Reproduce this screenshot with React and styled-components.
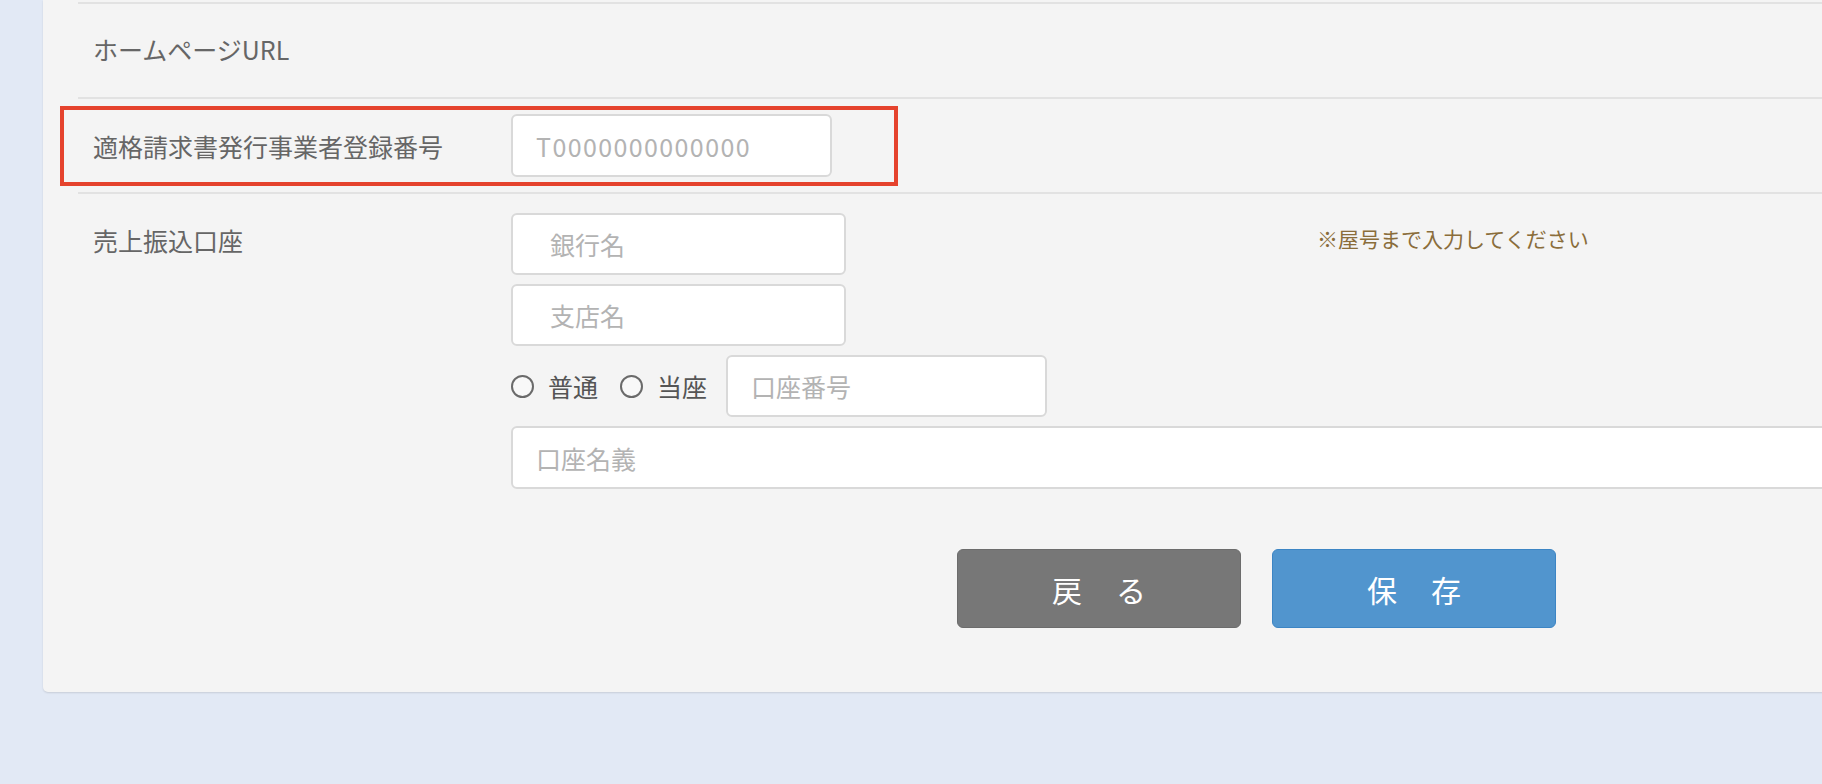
import React from 'react'
import styled, { createGlobalStyle } from 'styled-components'

const GlobalStyle = createGlobalStyle`
    html, body {
        margin: 0;
        padding: 0;
        background: #e2e9f5;
        overflow: hidden;
    }
    body {
        font-family: "Noto Sans CJK JP", "Noto Sans", sans-serif;
    }
    * {
        box-sizing: border-box;
    }
`;

const Page = styled.div`
    width: 1822px;
    height: 784px;
    overflow: hidden;
    padding-left: 43px;
`;

const Panel = styled.div`
    width: 2000px;
    background: #f4f4f4;
    border-radius: 0 0 0 5px;
    box-shadow: 0 1px 2px rgba(0, 0, 0, 0.12);
    padding: 2px 0 64px 35px;
`;

const Row = styled.div`
    position: relative;
    display: flex;
    align-items: ${p => (p.top ? 'flex-start' : 'center')};
    border-top: 2px solid #e2e2e2;
    min-height: ${p => p.height || 0}px;
    padding: ${p => p.pad || '0'};
`;

const Label = styled.div`
    width: 433px;
    flex: none;
    padding-left: 15px;
    font-size: 25px;
    line-height: ${p => p.lh || 36}px;
    color: #666666;
`;

const Fields = styled.div`
    display: flex;
    flex-direction: column;
    gap: 9px;
    flex: 1;
`;

const FieldLine = styled.div`
    display: flex;
    align-items: center;
`;

const Input = styled.input`
    width: ${p => p.w}px;
    height: ${p => p.h || 62}px;
    flex: none;
    border: 2px solid #d9d9d9;
    border-radius: 6px;
    background: #ffffff;
    padding: 0 0 0 ${p => p.indent || 23}px;
    font-family: "Noto Sans CJK JP", "Noto Sans", sans-serif;
    font-size: 25px;
    letter-spacing: ${p => p.ls || 0}px;
    color: #555555;
    outline: none;
    &::placeholder {
        color: #b3b3b3;
    }
`;

const Note = styled.span`
    align-self: flex-start;
    margin: 10px 0 0 471px;
    font-size: 21px;
    line-height: 30px;
    color: #8a6d3b;
    white-space: nowrap;
`;

const RadioLabel = styled.label`
    display: flex;
    align-items: center;
    gap: 14px;
    margin-right: ${p => p.mr}px;
    font-size: 25px;
    color: #555555;
    cursor: pointer;
`;

const RadioCircle = styled.span`
    width: 23px;
    height: 23px;
    border: 2px solid #6a6a6a;
    border-radius: 50%;
    background: #f8f8f8;
    flex: none;
`;

const Highlight = styled.div`
    position: absolute;
    left: -18px;
    top: 7px;
    width: 838px;
    height: 80px;
    border: 4px solid #e5432d;
    pointer-events: none;
`;

const ButtonRow = styled.div`
    display: flex;
    gap: 31px;
    margin: 60px 0 0 879px;
`;

const Button = styled.button`
    width: 284px;
    height: 79px;
    border-radius: 6px;
    border: 1px solid ${p => (p.primary ? '#3c85c4' : '#6c6c6c')};
    background: ${p => (p.primary ? '#5195ce' : '#777777')};
    color: #ffffff;
    font-family: "Noto Sans CJK JP", "Noto Sans", sans-serif;
    font-size: 30px;
    letter-spacing: 2px;
    padding: 0 0 0 2px;
    cursor: pointer;
`;

const App = () => {
    return (
        <>
            <GlobalStyle />
            <Page>
                <Panel>
                    <Row height={95} pad="0 0 4px 0">
                        <Label>ホームページURL</Label>
                    </Row>
                    <Row height={95}>
                        <Label>適格請求書発行事業者登録番号</Label>
                        <Input w={321} h={63} ls={1.4} placeholder="T0000000000000" />
                        <Highlight />
                    </Row>
                    <Row top pad="19px 0 0 0">
                        <Label lh={54}>売上振込口座</Label>
                        <Fields>
                            <FieldLine>
                                <Input w={335} h={62} indent={37} placeholder="銀行名" />
                                <Note>※屋号まで入力してください</Note>
                            </FieldLine>
                            <Input w={335} h={62} indent={37} placeholder="支店名" />
                            <FieldLine>
                                <RadioLabel mr={22}>
                                    <RadioCircle />
                                    普通
                                </RadioLabel>
                                <RadioLabel mr={19}>
                                    <RadioCircle />
                                    当座
                                </RadioLabel>
                                <Input w={321} h={62} placeholder="口座番号" />
                            </FieldLine>
                            <Input w={1400} h={63} placeholder="口座名義" />
                        </Fields>
                    </Row>
                    <ButtonRow>
                        <Button>戻　る</Button>
                        <Button primary>保　存</Button>
                    </ButtonRow>
                </Panel>
            </Page>
        </>
    )
}

export default App
